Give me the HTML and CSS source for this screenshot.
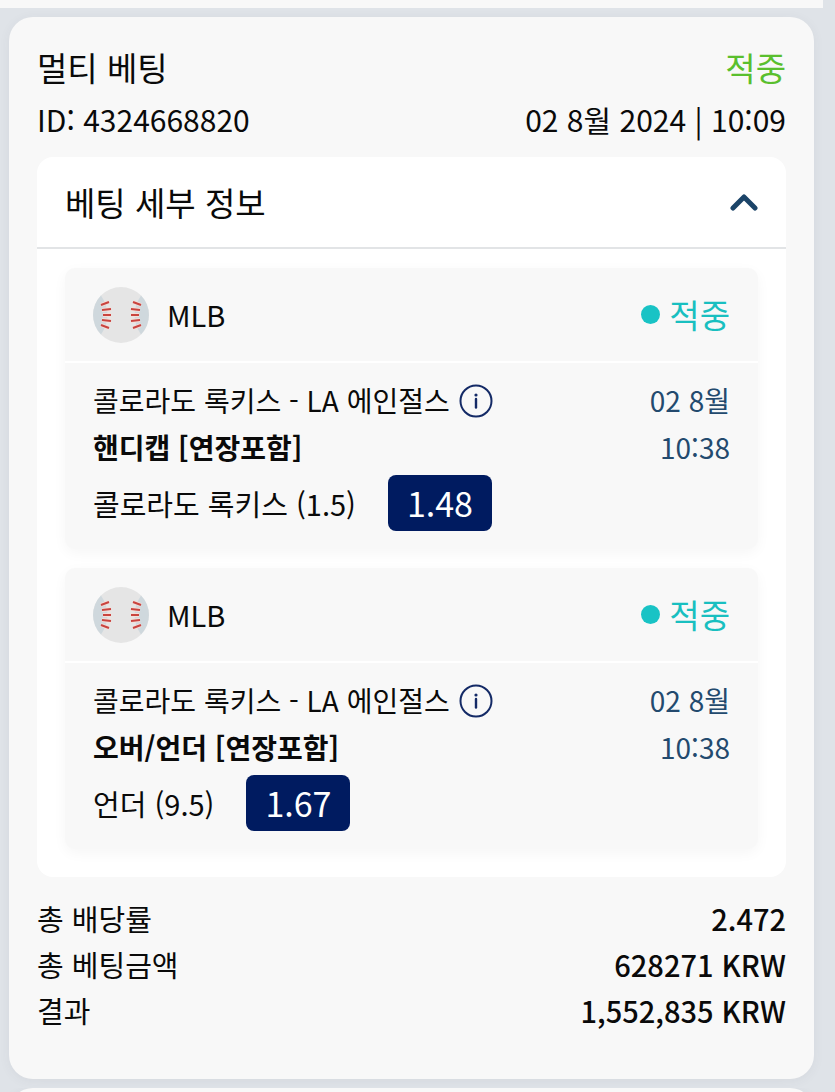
FILE: index.html
```html
<!DOCTYPE html>
<html lang="ko">
<head>
  <meta charset="UTF-8">
  <meta name="viewport" content="width=device-width, initial-scale=1.0">
  <title>베팅 내역</title>
  <link rel="stylesheet" href="styles.css">
</head>
<body>
  <svg class="sprite" aria-hidden="true">
    <symbol id="ball" viewBox="0 0 56 56">
      <circle cx="28" cy="28" r="28" fill="#e5e5e5"/>
      <path d="M8 8.500A28 28 0 0 0 8 47.500Q21 28 8 8.500Z" fill="#cfd8dd"/>
      <path d="M48 8.500A28 28 0 0 1 48 47.500Q35 28 48 8.500Z" fill="#cfd8dd"/>
      <path d="M8 18l8-3M9 23l9-1M10 28h8M9 33l9 1M8 38l8 3" stroke="#f6ded9" stroke-width="4"/>
      <path d="M48 18l-8-3M47 23l-9-1M46 28h-8M47 33l-9 1M48 38l-8 3" stroke="#f6ded9" stroke-width="4"/>
      <path d="M8 18l8-3M9 23l9-1M10 28h8M9 33l9 1M8 38l8 3" stroke="#c9443f" stroke-width="2"/>
      <path d="M48 18l-8-3M47 23l-9-1M46 28h-8M47 33l-9 1M48 38l-8 3" stroke="#c9443f" stroke-width="2"/>
    </symbol>
    <symbol id="info" viewBox="0 0 34 34">
      <circle cx="17" cy="17" r="15.500" fill="none" stroke="#142a66" stroke-width="2"/>
      <circle cx="17" cy="11" r="1.600" fill="#142a66"/>
      <path d="M17 15v8.500" stroke="#142a66" stroke-width="2.400" stroke-linecap="round"/>
    </symbol>
  </svg>

  <div class="prev-card"></div>

  <main class="list">
    <article class="card">
      <header class="card-head">
        <div class="row title">
          <span>멀티 베팅</span>
          <span class="win">적중</span>
        </div>
        <div class="row meta">
          <span>ID: 4324668820</span>
          <span>02 8월 2024 | 10:09</span>
        </div>
      </header>

      <section class="panel">
        <button type="button" class="panel-toggle" aria-expanded="true" aria-controls="legs">
          <span>베팅 세부 정보</span>
          <svg class="chevron" viewBox="0 0 28 18" aria-hidden="true">
            <path d="M3 15L14 4L25 15" fill="none" stroke="#1b4468" stroke-width="5" stroke-linecap="round" stroke-linejoin="round"/>
          </svg>
        </button>

        <div class="legs" id="legs">
          <div class="leg">
            <div class="leg-head">
              <svg class="ball" aria-hidden="true"><use href="#ball"/></svg>
              <span class="league">MLB</span>
              <span class="status">적중</span>
            </div>
            <div class="leg-body">
              <div class="match">
                <div class="teams">
                  <span>콜로라도 록키스 - LA 에인절스</span>
                  <button type="button" class="info" aria-label="정보"><svg><use href="#info"/></svg></button>
                </div>
                <div class="market">핸디캡 [연장포함]</div>
                <div class="pick">
                  <span>콜로라도 록키스 (1.5)</span>
                  <span class="odds">1.48</span>
                </div>
              </div>
              <div class="date">02 8월<br>10:38</div>
            </div>
          </div>

          <div class="leg">
            <div class="leg-head">
              <svg class="ball" aria-hidden="true"><use href="#ball"/></svg>
              <span class="league">MLB</span>
              <span class="status">적중</span>
            </div>
            <div class="leg-body">
              <div class="match">
                <div class="teams">
                  <span>콜로라도 록키스 - LA 에인절스</span>
                  <button type="button" class="info" aria-label="정보"><svg><use href="#info"/></svg></button>
                </div>
                <div class="market">오버/언더 [연장포함]</div>
                <div class="pick">
                  <span>언더 (9.5)</span>
                  <span class="odds">1.67</span>
                </div>
              </div>
              <div class="date">02 8월<br>10:38</div>
            </div>
          </div>
        </div>
      </section>

      <dl class="totals">
        <div class="row">
          <dt>총 배당률</dt>
          <dd>2.472</dd>
        </div>
        <div class="row">
          <dt>총 베팅금액</dt>
          <dd>628271 KRW</dd>
        </div>
        <div class="row">
          <dt>결과</dt>
          <dd>1,552,835 KRW</dd>
        </div>
      </dl>
    </article>

    <div class="next">
      <div class="card"></div>
    </div>
  </main>
</body>
</html>
```
FILE: styles.css
```css
* {
  box-sizing: border-box;
}
body {
  display: flex;
  flex-direction: column;
  min-height: 100vh;
  margin: 0;
  background-color: #dfe3e8;
  color: #0a0a0a;
  font-family: "Noto Sans CJK KR", sans-serif;
  font-size: 28px;
  line-height: 47px;
}
button {
  padding: 0;
  border: none;
  background: none;
  color: inherit;
  font: inherit;
  cursor: pointer;
}
.sprite {
  display: none;
}
.prev-card {
  height: 8px;
  margin-right: 12px;
  background-color: #f8f8f8;
}
.list {
  display: flex;
  flex: 1;
  flex-direction: column;
  gap: 9px;
  padding: 9px 21px 0 9px;
}
.card {
  padding: 28px 28px 46px;
  border-radius: 24px;
  background-color: #f8f8f8;
  box-shadow: 0 2px 12px rgba(60, 70, 90, 0.06);
}
.row {
  display: flex;
  justify-content: space-between;
}
.card-head {
  padding-bottom: 14px;
}
.title {
  font-size: 33px;
  line-height: 45px;
}
.win {
  color: #5abf2e;
}
.meta {
  margin-top: 6px;
  font-size: 30px;
}

/* 베팅 세부 정보 */
.panel {
  border-radius: 16px;
  background-color: #fff;
}
.panel-toggle {
  display: flex;
  justify-content: space-between;
  align-items: center;
  width: 100%;
  height: 92px;
  padding: 0 28px;
  border-bottom: 2px solid #e2e4e6;
  font-size: 33px;
}
.chevron {
  width: 28px;
  height: 18px;
}
.legs {
  display: flex;
  flex-direction: column;
  gap: 19px;
  padding: 19px 28px 28px;
}
.leg {
  border-radius: 10px;
  background-color: #f8f8f8;
  box-shadow: 0 4px 14px rgba(0, 0, 0, 0.04);
}
.leg-head {
  display: flex;
  align-items: center;
  height: 95px;
  padding: 0 28px;
  border-bottom: 2px solid #fff;
}
.ball {
  width: 56px;
  height: 56px;
}
.league {
  margin-left: 18px;
  font-size: 29px;
}
.status {
  display: flex;
  align-items: center;
  gap: 9px;
  margin-left: auto;
  color: #19bfc0;
  font-size: 33px;
}
.status::before {
  content: "";
  width: 19px;
  height: 19px;
  border-radius: 50%;
  background-color: #19c3c5;
}
.leg-body {
  display: flex;
  justify-content: space-between;
  padding: 14px 28px 18px;
}
.teams {
  display: flex;
  align-items: center;
  gap: 9px;
}
.info,
.info svg {
  display: block;
  width: 34px;
  height: 34px;
}
.market {
  font-weight: bold;
}
.pick {
  display: flex;
  align-items: center;
  gap: 32px;
  margin-top: 4px;
  font-size: 29px;
}
.odds {
  padding: 0 19px;
  border-radius: 8px;
  background-color: #001b60;
  color: #fff;
  font-size: 34px;
  line-height: 56px;
}
.date {
  color: #234a6e;
  text-align: right;
}

/* 합계 */
.totals {
  margin: 18px 0 0;
  font-size: 29px;
  line-height: 46px;
}
.totals dd {
  margin: 0;
  font-weight: 500;
}

/* 다음 카드의 윗부분 */
.next {
  flex: 1 0 0;
  overflow: hidden;
}
```
